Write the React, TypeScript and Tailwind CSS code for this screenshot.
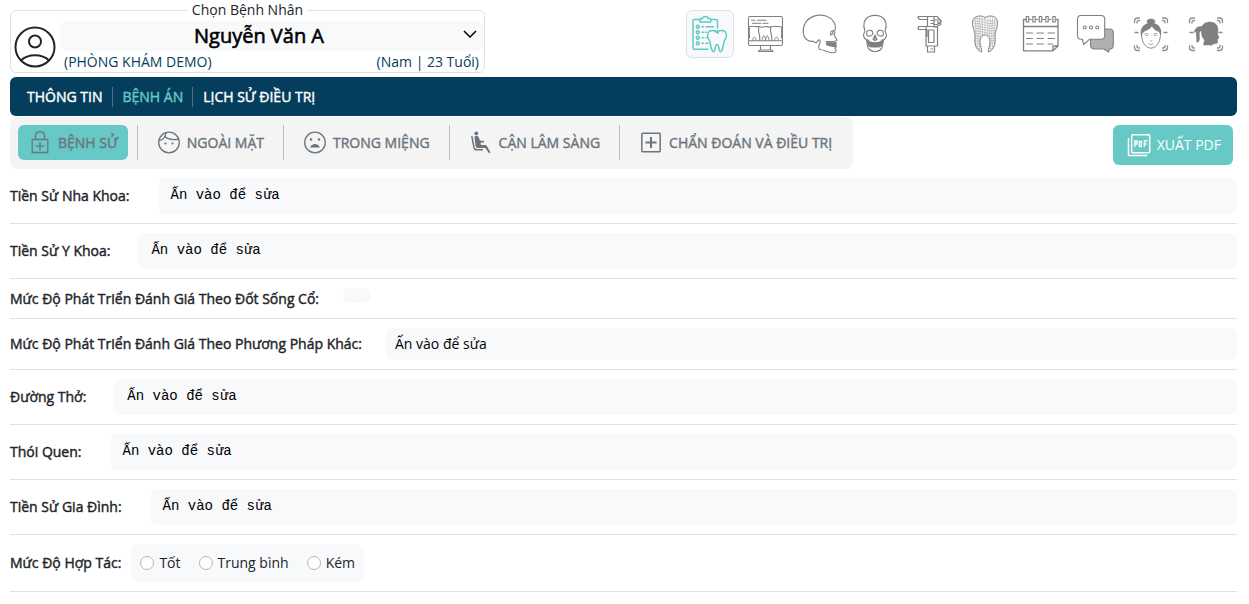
import React from "react";

const THICK = "[-webkit-text-stroke:0.03em_currentColor]";

function Glyph({ children }: { children: React.ReactNode }) {
  return (
    <svg viewBox="0 0 48 48" className="size-full" fill="none" stroke="currentColor" strokeWidth="1.1" strokeLinecap="round" strokeLinejoin="round" aria-hidden="true">
      {children}
    </svg>
  );
}

const Checklist = () => (
  <Glyph>
    <g strokeWidth="1.5">
      <path d="M14 9.5H8.5Q7 9.500 7 11V37.500Q7 39.300 8.500 39.300H22M25 9.500H30Q31.500 9.500 31.500 11V18" />
      <path d="M14 12V9.300Q14 8.500 15 8.500H16.500Q17 6.500 19.300 6.500T22 8.500H23.700Q24.700 8.500 24.700 9.300V12Z" />
      {[16.7, 22.2, 27.7, 33.2].map((y) => (
        <circle key={y} cx="11.800" cy={y} r="1.500" />
      ))}
      <path d="M16 16.700H17.500M20 16.700H27.500M16 22.200H17.500M19.500 22.200H20.500M16 27.700H17.500M20 27.700H20.500M16 33.200H17.500M20 33.200H22" />
      <path fill="#f8f9fa" d="M31 21.500C28.500 20.500 25.500 19.500 23 21.500C20.500 24 21.500 28 23.500 30.500C24.800 33 24.300 38 26.500 41C27.500 42.300 28.500 41.500 28.700 40C29.200 36.500 29.500 34.500 31 34.500S32.800 36.500 33.300 40C33.500 41.500 34.500 42.300 35.500 41C37.700 38 37.200 33 38.500 30.500C40.500 28 41.500 24 39 21.500C36.500 19.500 33.500 20.500 31 21.500ZM29 21.500L32.500 23" />
    </g>
  </Glyph>
);

const Monitor = () => (
  <Glyph>
    <rect x="7.500" y="6.500" width="34" height="29" rx="1.500" />
    <path d="M10.500 10.300H14M16.500 10.300H25M11.500 13.300H20M22 13.300H27M7.500 30.700H41.500M19.500 35.500V40H29.500V35.500M17.500 41.500Q17.500 40 19 40H30.500Q32 40 32 41.500Z" />
    <path d="M8 16.800C11 15.500 14 17 17 16.500S20 18 22 17C25 15.500 28 18 30 16.800S35 16 41 17M18 17C16 22 20 25 18.500 30.500M30 17C28 22 32 25 30.500 30.500M8.500 18C7.500 23 9 26 8.500 28M40.500 18C41.500 23 40 26 40.500 28" />
    <path strokeWidth="0.900" d="M11.500 30.500C12 26 14.500 26 15 30.500M21 30.500C22 24 24 24 24.500 30.500C25.500 24 27 24 28 30.500M33.500 30.500C34 26 37 26 37.500 30.500" />
  </Glyph>
);

const SkullSide = () => (
  <Glyph>
    <path d="M39 20C40.800 13.500 36 8 30 6C22 3.500 13 6.500 9.300 13C5.500 20 7 28 12 30.500C14.500 32 17 31 18 31.500C19 33.500 21 33 22 30.500C23.800 29 24.500 30.500 24 33C22.800 35 22.500 38 23.500 39.500C28 39.500 31 42.500 36 42.700C39 43 40.500 42 40 39.500C38 38 38.500 37.500 40.500 37M39 20C38 22.500 40 23.500 38 24.500L41 30.500L38 31.500H30" />
    <path d="M35 21.500L37.500 20.500L36.500 24L34.500 25Z" />
    <path fill="currentColor" d="M31 32C34 33.500 37 33 40 32.500V36.500C36 36.500 33 36 30.500 34.500Z" />
  </Glyph>
);

const SkullFront = () => (
  <Glyph>
    <path d="M14 21C11.500 15 13 9 18 6.500C22 5 26 5 30 6.500C35 9 36.500 15 34 21C36.500 25 35.500 28.500 32.500 30L31.500 36C30.500 40 27.500 41.500 24 41.700C20.500 41.500 17.500 40 16.500 36L15.500 30C12.500 28.500 11.500 25 14 21Z" />
    <path d="M16 21.500C18.500 19 21.500 20.500 22 23C21.500 26.500 16.500 27 15.500 24.500ZM32 21.500C29.500 19 26.500 20.500 26 23C26.500 26.500 31.500 27 32.500 24.500ZM24 25L26 29.500L24 30.500L22 29.500ZM24 30V27" />
    <path fill="currentColor" d="M16.500 29.500C18 34 30 34 31.500 29.500C32 38 27 37 24 37S16 38 16.500 29.500Z" />
  </Glyph>
);

const Caliper = () => (
  <Glyph>
    <g strokeWidth="1.200" strokeLinecap="butt">
      <path d="M12 6.500H31L35.500 11.500L31 14.500H28V6.500M12 6.500Q12 9.500 15 9.500H21.500M12 16.500H31L35 14L31 11.500M12 19.500Q12 16.500 14 16.500M12 19.500H21V27M21.500 6.500V16.500M28 14V17H31.500V36H20V17M28 10H34" />
      <path d="M22.500 20H28V32.500H22.500ZM21.500 36V42H28.500V36M24.500 10.500H28M24.500 13.500H28M24.500 39H27" />
    </g>
  </Glyph>
);

const TOOTH_OUTLINE =
  "M24 7.500C20 4.500 12 5.500 11.500 12C11 18 14.500 21 14 27C13 34 15 40 20.500 42C21.500 40 19 36 19 32C19 27 22 25 24 25S29 27 29 32C29 36 26.500 40 27.500 42C33 40 35 34 34 27C33.500 21 37 18 36.500 12C36 5.500 28 4.500 24 7.500Z";

const Tooth = () => (
  <Glyph>
    <defs>
      <clipPath id="tooth-shape">
        <path d={TOOTH_OUTLINE} />
      </clipPath>
    </defs>
    <path d={TOOTH_OUTLINE} strokeWidth="0.900" />
    <g clipPath="url(#tooth-shape)" strokeWidth="0.400">
      {[9, 11.5, 14, 16.5, 19, 21.5, 24, 26.5, 29, 31.5, 34, 36.5, 39].map((y) => (
        <path key={y} d={`M10 ${y}Q17 ${y - 1.5} 24 ${y + 1}T38 ${y}`} />
      ))}
      {[13.5, 16, 18.5, 21, 24, 27, 29.5, 32, 34.5].map((x) => (
        <path key={x} d={`M${x} 5Q${x + (24 - x) * 0.3} 22 ${x} 42`} />
      ))}
    </g>
  </Glyph>
);

const Calendar = () => (
  <Glyph>
    <path strokeWidth="1.300" d="M10 9.500H7.500V40.800H37L42 36V9.500H40.500M7.500 16.500H42M37 40.800V36H42" />
    {[11.5, 18, 24.5, 31, 38].map((x) => (
      <g key={x}>
        <rect x={x - 1.2} y="6.500" width="2.400" height="5.500" />
        <path d={`M${x + 2} 9.500H${x + 4}`} />
      </g>
    ))}
    <path d="M10.500 23H16.500M21 23H27.500M32 23H38.500M10.500 28.500H16.500M21 28.500H27.500M32 28.500H38.500M10.500 34H16.500M21 34H27.500M32 34H36.500" />
  </Glyph>
);

const Chat = () => (
  <Glyph>
    <path fill="#b0b0b0" d="M30 19H38.500Q42.300 19 42.300 22.500V35Q42.300 39 38.500 39L37.500 42L33 39H24Q19.500 39 19.500 35V30Z" />
    <path fill="#fff" d="M10 5.500H30Q33.700 5.500 33.700 9V25.500Q33.700 29.300 30 29.300H18.500L12.500 34.500L11.500 29.300H10Q6.500 29.300 6.500 25.500V9Q6.500 5.500 10 5.500Z" />
    <circle cx="13.800" cy="17.500" r="1.500" />
    <circle cx="20" cy="17.500" r="1.500" />
    <circle cx="26.300" cy="17.500" r="1.500" />
  </Glyph>
);

const ScanFrame = () => (
  <path
    strokeWidth="1.300"
    stroke="#8f8f8f"
    d="M8.500 12.500V11Q8.500 8 11.500 8H13.500M11 13V12.500Q11 10.500 13 10.500H13.500M41.500 12.500V11Q41.500 8 38.500 8H36.500M39 13V12.500Q39 10.500 37 10.500H36.500M8.500 36V37.500Q8.500 40.500 11.500 40.500H13.500M11 35.500V36Q11 38 13 38H13.500M41.500 36V37.500Q41.500 40.500 38.500 40.500H36.500M39 35.500V36Q39 38 37 38H36.500M9 22.500H12M38 22.500H41"
  />
);

const FaceFront = () => (
  <Glyph>
    <ScanFrame />
    <path strokeWidth="0.900" d="M15.500 20C15 29 17 34.500 22 37.500Q25 39 28 37.500C33 34.500 35 29 34.500 20" />
    <path fill="currentColor" strokeWidth="0.500" d="M22 13.500C19.500 10.500 22 9 25 9S30.500 10.500 28 13.500C33 14.500 35.500 18 34.700 25L33 21.500C30 21 27.500 19 26 16C23 20.500 18 20.500 16.500 23L15.300 26C14 19 17 14.500 22 13.500Z" />
    <path strokeWidth="0.700" d="M18.500 24Q20.500 22.800 22.500 24M27.500 24Q29.500 22.800 31.500 24M20 25.500H21.500M28.500 25.500H30M24.500 31H26M23 34Q25 35 27 34" />
  </Glyph>
);

const FaceSide = () => (
  <Glyph>
    <ScanFrame />
    <path fill="currentColor" strokeWidth="0.500" d="M20.500 18C21 14 25 12 29 12C34 12 37 15 37 20L36.500 24L38 28L36.500 29V33L32.500 34L30 35.500V35H22.500L23.500 30C21 27.500 20 24 20.500 20.500C17.500 21.500 18.500 25 18.500 28C18.500 31 17 33 15.500 32C16.500 28 14.500 25.500 15.500 21L13 22.500C14 18.500 16.500 16 20.500 16.500Z" />
  </Glyph>
);

const tools = [
  { name: "Bệnh án", Icon: Checklist },
  { name: "X quang", Icon: Monitor },
  { name: "Sọ nghiêng", Icon: SkullSide },
  { name: "Sọ thẳng", Icon: SkullFront },
  { name: "Đo mẫu hàm", Icon: Caliper },
  { name: "Răng", Icon: Tooth },
  { name: "Lịch hẹn", Icon: Calendar },
  { name: "Trò chuyện", Icon: Chat },
  { name: "Mặt thẳng", Icon: FaceFront },
  { name: "Mặt nghiêng", Icon: FaceSide },
];

const LineIcon = ({ children }: { children: React.ReactNode }) => (
  <svg viewBox="0 0 24 24" className="size-6 shrink-0" fill="none" stroke="currentColor" strokeWidth="1.300" aria-hidden="true">
    {children}
  </svg>
);

const LockIcon = () => (
  <LineIcon>
    <path d="M4.200 8.500H19.800V21.500H4.200ZM7.500 8.500V5Q7.500 .7 12 .7T16.500 5V8.500M12 11V19.500M7.800 15.200H16.200" />
  </LineIcon>
);
const FaceIcon = () => (
  <LineIcon>
    <circle cx="12" cy="11.500" r="10.300" />
    <path d="M2 9.500C6 9 8.500 6 9 1.500M7.500 5C10 8 14 9.500 22 8" />
    <circle cx="8.500" cy="12.500" r="1.100" fill="currentColor" stroke="none" />
    <circle cx="15.500" cy="12.500" r="1.100" fill="currentColor" stroke="none" />
  </LineIcon>
);
const FrownIcon = () => (
  <LineIcon>
    <circle cx="12" cy="11.500" r="10.300" />
    <circle cx="8" cy="8.500" r="1.200" fill="currentColor" stroke="none" />
    <circle cx="16" cy="8.500" r="1.200" fill="currentColor" stroke="none" />
    <path d="M7 16.500Q8.500 13 12 13T17 16.500Z" fill="currentColor" stroke="none" />
  </LineIcon>
);
const PlusIcon = () => (
  <LineIcon>
    <rect x="2.800" y="2.300" width="18.400" height="18.400" rx="1" strokeWidth="1.500" />
    <path d="M12 6V17M6.500 11.500H17.500" strokeWidth="2" />
  </LineIcon>
);
const SeatIcon = () => (
  <LineIcon>
    <circle cx="7.300" cy="2.300" r="1.900" fill="currentColor" stroke="none" />
    <path d="M5.500 5.500Q8 4 9.500 6L11 9.500L15 10V11.500L11.500 11.500L12 14H16Q17.500 14 18 15.200L21.500 21.500L20 22.300L16.300 17H9Q7 17 6.500 15Z" fill="currentColor" stroke="none" />
    <path d="M2.800 5L5 16.500Q5.500 18.800 8 18.800H14" strokeWidth="1.500" />
  </LineIcon>
);

const sections = [
  { label: "BỆNH SỬ", Icon: LockIcon, active: true },
  { label: "NGOÀI MẶT", Icon: FaceIcon },
  { label: "TRONG MIỆNG", Icon: FrownIcon },
  { label: "CẬN LÂM SÀNG", Icon: SeatIcon },
  { label: "CHẨN ĐOÁN VÀ ĐIỀU TRỊ", Icon: PlusIcon },
];

const ROW = "flex items-center border-b border-[#dee2e6] py-[9px]";
const LABEL = `shrink-0 ${THICK}`;

function NoteRow({ id, label }: { id: string; label: string }) {
  return (
    <div className={`${ROW} gap-7`}>
      <label htmlFor={id} className={LABEL}>{label}</label>
      <textarea
        id={id}
        rows={1}
        defaultValue="Ấn vào để sửa"
        className="block h-9 min-w-0 flex-1 resize-none overflow-hidden rounded-lg bg-[#f8f9fb] px-[13px] py-[7px] font-['Liberation_Mono',monospace] text-sm text-black outline-none"
      />
    </div>
  );
}

export default function App() {
  return (
    <div className="min-h-screen bg-white pl-[10px] pr-3 pt-px font-['Open_Sans',sans-serif] text-sm text-[#212529]">
      <header className="flex items-start justify-between">
        <fieldset className="w-[475px] min-w-0 rounded-md border border-[#dee2e6]">
          <legend className="mx-auto px-1 leading-[18px]">Chọn Bệnh Nhân</legend>
          <div className="flex items-center gap-1 pl-[3px] pt-[2px]">
            <svg viewBox="0 0 42 42" className="size-[42px] shrink-0" fill="none" stroke="#212529" strokeWidth="2" aria-hidden="true">
              <circle cx="21" cy="21" r="19.500" />
              <circle cx="21" cy="15.500" r="6" />
              <path d="M7 34.500C14 27.500 28 27.500 35 34.500" />
            </svg>
            <div className="min-w-0 flex-1">
              <div className="relative">
                <select
                  aria-label="Chọn Bệnh Nhân"
                  className={`block h-[30px] w-full appearance-none rounded-lg bg-[#f8f9fb] pr-[26px] text-center text-xl leading-[30px] text-black outline-none [text-align-last:center] ${THICK}`}
                >
                  <option>Nguyễn Văn A</option>
                </select>
                <svg viewBox="0 0 14 8" className="pointer-events-none absolute right-[7px] top-[9px] h-2 w-[14px]" fill="none" stroke="#000" strokeWidth="1.500" aria-hidden="true">
                  <path d="M1 1L7 7L13 1" />
                </svg>
              </div>
              <div className="flex justify-between pl-1 pr-[5px] leading-[21px] text-[#053e5d]">
                <span>(PHÒNG KHÁM DEMO)</span>
                <span>(Nam | 23 Tuổi)</span>
              </div>
            </div>
          </div>
        </fieldset>
        <div className="mr-2 mt-[9px] flex gap-[7px]">
          {tools.map(({ name, Icon }, i) => (
            <button
              key={name}
              aria-label={name}
              className={
                i === 0
                  ? "size-12 rounded-md bg-[#f8f9fa] text-[#5fc9c6] outline outline-1 -outline-offset-1 outline-[#dee2e6]"
                  : "size-12 rounded-md text-[#808080]"
              }
            >
              <Icon />
            </button>
          ))}
        </div>
      </header>

      <nav className={`mt-1 flex h-[39px] items-center rounded-md bg-[#053e5d] px-[7px] text-white ${THICK}`}>
        <a href="#thong-tin" className="px-[10px]">THÔNG TIN</a>
        <a href="#benh-an" className="border-x border-[#4a7389] px-[9px] text-[#66c9c6]">BỆNH ÁN</a>
        <a href="#lich-su" className="px-[10px]">LỊCH SỬ ĐIỀU TRỊ</a>
      </nav>

      <div className="flex items-start justify-between pr-1">
        <div className="mt-px flex rounded-lg bg-[#f4f4f4] p-2 pb-[9px]">
          {sections.map(({ label, Icon, active }, i) => (
            <div key={label} className={i === 0 ? "flex pr-[9px]" : "flex border-l border-[#bdbdbd] px-[9px] last:pr-[3px]"}>
              <button
                className={`flex h-[35px] items-center gap-[6px] rounded-md px-[10px] text-[#6c757d] ${THICK} ${active ? "bg-[#66c9c6]" : ""}`}
              >
                <Icon />
                {label}
              </button>
            </div>
          ))}
        </div>
        <button className="mt-[9px] flex h-10 items-center gap-[6px] rounded-md bg-[#66c9c6] pl-[14px] pr-3 text-white">
          <svg viewBox="0 0 24 24" className="size-6" fill="none" stroke="currentColor" strokeWidth="1.500" aria-hidden="true">
            <rect x="4.700" y="1.700" width="18" height="18" rx="1" />
            <path d="M1.500 5V22.500H20" />
            <path strokeWidth="1.300" d="M7.800 14V8H10V11H8M12.300 8.500V13.500H14.300V8.500ZM17.300 14V8H20.300M17.300 11H19.800" />
          </svg>
          XUẤT PDF
        </button>
      </div>

      <main>
        <NoteRow id="nha-khoa" label="Tiền Sử Nha Khoa:" />
        <NoteRow id="y-khoa" label="Tiền Sử Y Khoa:" />
        <div className={`${ROW} gap-6`}>
          <span className={`${LABEL} leading-[21px]`}>Mức Độ Phát Triển Đánh Giá Theo Đốt Sống Cổ:</span>
          <span className="h-[15px] w-7 self-start rounded-md bg-[#f8f9fb]" />
        </div>
        <div className={`${ROW} gap-6`}>
          <label htmlFor="phuong-phap" className={LABEL}>Mức Độ Phát Triển Đánh Giá Theo Phương Pháp Khác:</label>
          <input id="phuong-phap" defaultValue="Ấn vào để sửa" className="h-8 min-w-0 flex-1 rounded-md bg-[#f8f9fb] px-[9px] pb-[2px] text-black outline-none" />
        </div>
        <NoteRow id="duong-tho" label="Đường Thở:" />
        <NoteRow id="thoi-quen" label="Thói Quen:" />
        <NoteRow id="gia-dinh" label="Tiền Sử Gia Đình:" />
        <div role="radiogroup" aria-labelledby="hop-tac" className={`${ROW} gap-[10px]`}>
          <span id="hop-tac" className={LABEL}>Mức Độ Hợp Tác:</span>
          <div className="flex h-[38px] items-center gap-[18px] rounded-lg bg-[#f8f9fb] px-[9px]">
            {["Tốt", "Trung bình", "Kém"].map((value) => (
              <label key={value} className="flex items-center gap-[5px]">
                <input type="radio" name="cooperation" className="size-[14px] appearance-none rounded-full border border-[#b5b8bb] bg-white checked:border-4 checked:border-[#66c9c6]" />
                {value}
              </label>
            ))}
          </div>
        </div>
      </main>
    </div>
  );
}
